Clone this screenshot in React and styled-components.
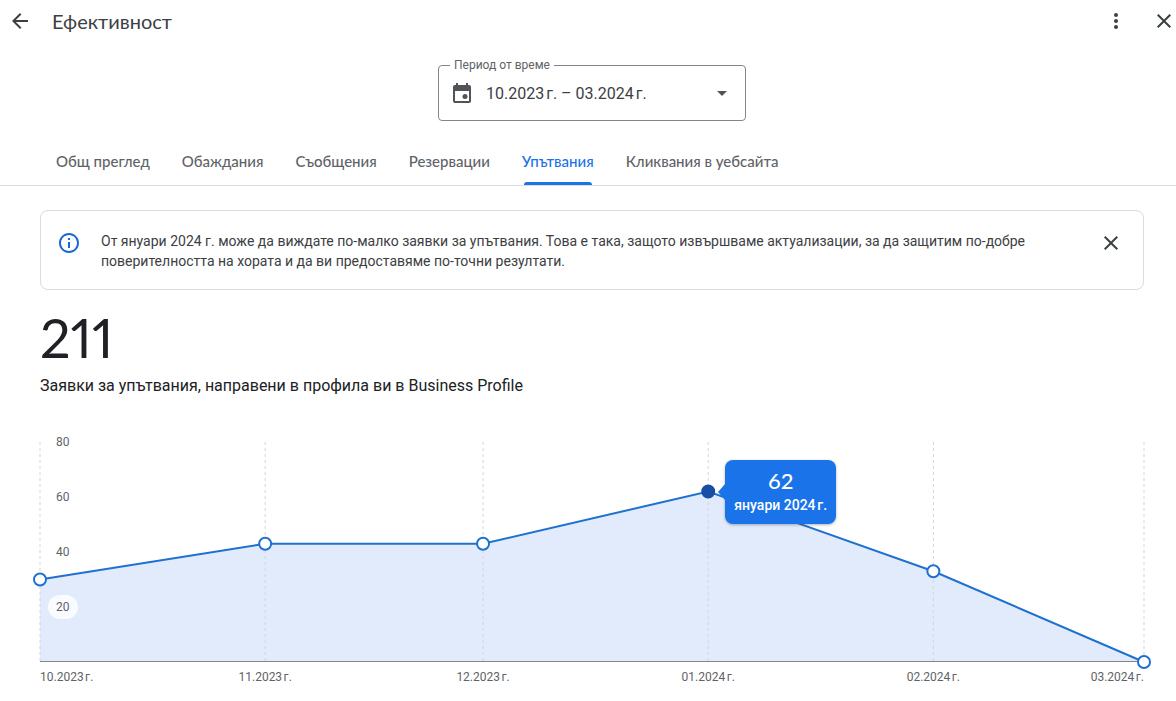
import React from 'react';
import styled, { createGlobalStyle } from 'styled-components';

const GlobalStyle = createGlobalStyle`
  * {
    box-sizing: border-box;
  }

  body {
    margin: 0;
    background: #fff;
    color: #3c4043;
    font-family: Roboto, "Noto Sans", sans-serif;
  }
`;

const brandFont = 'Lato, "Noto Sans", sans-serif';

const Header = styled.header`
  display: flex;
  align-items: center;
  height: 42px;
  padding-left: 8px;
`;

const Title = styled.h1`
  flex: 1;
  margin: 0 0 0 20px;
  font-family: ${brandFont};
  font-size: 20px;
  font-weight: 400;
  line-height: 24px;
`;

const HeaderActions = styled.div`
  display: flex;
  gap: 24px;
`;

const IconButton = styled.button`
  display: flex;
  width: 24px;
  height: 24px;
  padding: 0;
  border: 0;
  background: none;
  color: #3c4043;
  cursor: pointer;
`;

const Icon = styled.svg`
  flex: none;
  width: 24px;
  height: 24px;
  fill: currentColor;
`;

const PeriodRow = styled.div`
  display: flex;
  justify-content: center;
  padding: 15px 32px 0 40px;
`;

const PeriodField = styled.fieldset`
  width: 308px;
  height: 64px;
  min-width: 0;
  margin: 0;
  padding: 0;
  border: 1px solid #80868b;
  border-radius: 4px;
`;

const PeriodLegend = styled.legend`
  margin-left: 11px;
  padding: 0 4px;
  color: #5f6368;
  font-size: 12px;
  line-height: 16px;
`;

const PeriodButton = styled.button`
  display: flex;
  align-items: center;
  width: 100%;
  height: 40px;
  padding: 0 11px;
  border: 0;
  background: none;
  color: #3c4043;
  font-family: inherit;
  font-size: 16px;
  text-align: left;
  cursor: pointer;

  span {
    flex: 1;
    margin-left: 12px;
  }
`;

const FieldIcon = styled(Icon)`
  color: #505357;
`;

const Tabs = styled.nav`
  display: flex;
  gap: 32px;
  margin-top: 16px;
  padding: 0 56px;
  border-bottom: 1px solid #dadce0;
`;

const Tab = styled.a`
  height: 48px;
  color: ${(props) => (props.$active ? '#1a73e8' : '#5f6368')};
  font-family: ${brandFont};
  font-size: 15px;
  font-weight: 500;
  line-height: 48px;
  text-decoration: none;
  white-space: nowrap;

  &::after {
    content: '';
    display: ${(props) => (props.$active ? 'block' : 'none')};
    height: 3px;
    margin: -3px 2px 0;
    border-radius: 3px 3px 0 0;
    background: #1a73e8;
  }
`;

const Content = styled.main`
  padding: 24px 32px 0 40px;
`;

const Notice = styled.section`
  display: flex;
  align-items: flex-start;
  padding: 20px 20px 18px 16px;
  border: 1px solid #dadce0;
  border-radius: 8px;
`;

const InfoIcon = styled(Icon)`
  color: #1967d2;
`;

const NoticeText = styled.p`
  flex: 1;
  margin: 0 40px 0 20px;
  font-size: 14px;
  line-height: 20px;
`;

const Total = styled.div`
  margin-top: 20px;
  color: #202124;
  font-family: ${brandFont};
  font-size: 54px;
  font-variant-numeric: proportional-nums;
  line-height: 56px;
`;

const Caption = styled.p`
  margin: 8px 0 0;
  color: #202124;
  font-size: 16px;
  line-height: 24px;
`;

const ChartBox = styled.div`
  position: relative;
  margin-top: 44px;
`;

const Plot = styled.svg`
  display: block;
  width: 100%;
  height: 248px;
  overflow: visible;
`;

const AxisText = styled.text`
  fill: #5f6368;
  font-size: 12px;
`;

const Tooltip = styled.div`
  position: absolute;
  width: 111px;
  height: 64px;
  margin-left: 17px;
  padding-top: 9px;
  border-radius: 8px;
  background: #1a73e8;
  box-shadow: 0 1px 3px rgba(60, 64, 67, 0.4);
  color: #fff;
  text-align: center;

  &::before {
    content: '';
    position: absolute;
    top: 24px;
    left: -7px;
    border: solid transparent;
    border-width: 8px 7px 8px 0;
    border-right-color: #1a73e8;
  }
`;

const TooltipValue = styled.div`
  font-family: ${brandFont};
  font-size: 22px;
  font-weight: 500;
  line-height: 24px;
`;

const TooltipLabel = styled.div`
  font-size: 14px;
  font-weight: 500;
  line-height: 24px;
`;

const tabs = ['Общ преглед', 'Обаждания', 'Съобщения', 'Резервации', 'Упътвания', 'Кликвания в уебсайта'];

// day = days since the start of the period
const points = [
  { day: 0, value: 30, label: '10.2023\u202fг.' },
  { day: 31, value: 43, label: '11.2023\u202fг.' },
  { day: 61, value: 43, label: '12.2023\u202fг.' },
  { day: 92, value: 62, label: '01.2024\u202fг.' },
  { day: 123, value: 33, label: '02.2024\u202fг.' },
  { day: 152, value: 0, label: '03.2024\u202fг.' },
];

const TOTAL_DAYS = 152;
const MAX_VALUE = 80;
const PLOT_HEIGHT = 220;
const SELECTED = 3;

const toX = (day) => `${(day / TOTAL_DAYS) * 100}%`;
const toY = (value) => PLOT_HEIGHT - (value / MAX_VALUE) * PLOT_HEIGHT;

const labelAnchor = (index) => {
  if (index === 0) return 'start';
  return index === points.length - 1 ? 'end' : 'middle';
};

const CloseIcon = () => (
  <Icon viewBox="0 0 24 24">
    <path d="M19 6.41L17.59 5 12 10.59 6.41 5 5 6.41 10.59 12 5 17.59 6.41 19 12 13.41 17.59 19 19 17.59 13.41 12z" />
  </Icon>
);

const Chart = () => {
  const line = points.map((p) => `${p.day},${toY(p.value)}`).join(' ');

  return (
    <ChartBox>
      <Plot role="img" aria-label="Заявки за упътвания по месеци">
        <svg width="100%" height={PLOT_HEIGHT} viewBox={`0 0 ${TOTAL_DAYS} ${PLOT_HEIGHT}`} preserveAspectRatio="none" overflow="visible">
          <polygon points={`0,${PLOT_HEIGHT} ${line}`} fill="#e1ebfc" />
        </svg>
        {points.map((p) => (
          <line key={p.day} x1={toX(p.day)} x2={toX(p.day)} y1="0" y2={PLOT_HEIGHT} stroke="#d2d5d9" strokeDasharray="3 3" />
        ))}
        <line x1="0" x2="100%" y1="219.5" y2="219.5" stroke="#80868b" />
        <svg width="100%" height={PLOT_HEIGHT} viewBox={`0 0 ${TOTAL_DAYS} ${PLOT_HEIGHT}`} preserveAspectRatio="none" overflow="visible">
          <polyline points={line} fill="none" stroke="#1f71cf" strokeWidth="2" vectorEffect="non-scaling-stroke" />
        </svg>
        {points.map((p, i) => (
          <circle
            key={p.day}
            cx={toX(p.day)}
            cy={toY(p.value)}
            r="6"
            fill={i === SELECTED ? '#174ea6' : '#fff'}
            stroke={i === SELECTED ? '#174ea6' : '#1f71cf'}
            strokeWidth="2"
          />
        ))}
        <rect x="8" y="153" width="30" height="24" rx="12" fill="#fff" fillOpacity="0.8" />
        {[80, 60, 40, 20].map((value) => (
          <AxisText key={value} x="16" y={toY(value) + 4}>{value}</AxisText>
        ))}
        {points.map((p, i) => (
          <AxisText key={p.label} x={toX(p.day)} y="239" textAnchor={labelAnchor(i)}>{p.label}</AxisText>
        ))}
      </Plot>
      <Tooltip role="tooltip" style={{ left: toX(points[SELECTED].day), top: toY(points[SELECTED].value) - 32 }}>
        <TooltipValue>{points[SELECTED].value}</TooltipValue>
        <TooltipLabel>{'януари 2024\u202fг.'}</TooltipLabel>
      </Tooltip>
    </ChartBox>
  );
};

const App = () => {
  return (
    <>
      <GlobalStyle />
      <Header>
        <IconButton aria-label="Назад">
          <Icon viewBox="0 0 24 24">
            <path d="M20 11H7.83l5.59-5.59L12 4l-8 8 8 8 1.41-1.41L7.83 13H20v-2z" />
          </Icon>
        </IconButton>
        <Title lang="bg">Ефективност</Title>
        <HeaderActions>
          <IconButton aria-label="Още опции">
            <Icon viewBox="0 0 24 24">
              <circle cx="12" cy="6" r="2" />
              <circle cx="12" cy="12" r="2" />
              <circle cx="12" cy="18" r="2" />
            </Icon>
          </IconButton>
          <IconButton aria-label="Затваряне">
            <CloseIcon />
          </IconButton>
        </HeaderActions>
      </Header>
      <PeriodRow>
        <PeriodField>
          <PeriodLegend id="period-label">Период от време</PeriodLegend>
          <PeriodButton aria-labelledby="period-label period-value">
            <FieldIcon viewBox="0 0 24 24">
              <path d="M19 4h-1V2h-2v2H8V2H6v2H5a2 2 0 0 0-2 2v14a2 2 0 0 0 2 2h14a2 2 0 0 0 2-2V6a2 2 0 0 0-2-2zm0 16H5V10h14v10z" />
              <circle cx="15" cy="15.500" r="2.500" />
            </FieldIcon>
            <span id="period-value">{'10.2023\u202fг. – 03.2024\u202fг.'}</span>
            <FieldIcon viewBox="0 0 24 24">
              <path d="M7 10l5 5 5-5z" />
            </FieldIcon>
          </PeriodButton>
        </PeriodField>
      </PeriodRow>
      <Tabs lang="bg">
        {tabs.map((tab) => (
          <Tab key={tab} href="#" $active={tab === 'Упътвания'}>{tab}</Tab>
        ))}
      </Tabs>
      <Content>
        <Notice>
          <InfoIcon viewBox="0 0 24 24">
            <path d="M11 7h2v2h-2zm0 4h2v6h-2zm1-9C6.480 2 2 6.480 2 12s4.480 10 10 10 10-4.480 10-10S17.520 2 12 2zm0 18c-4.410 0-8-3.590-8-8s3.590-8 8-8 8 3.590 8 8-3.590 8-8 8z" />
          </InfoIcon>
          <NoticeText>
            От януари 2024 г. може да виждате по-малко заявки за упътвания. Това е така, защото извършваме актуализации, за да защитим по-добре поверителността на хората и да ви предоставяме по-точни резултати.
          </NoticeText>
          <IconButton aria-label="Скриване на съобщението">
            <CloseIcon />
          </IconButton>
        </Notice>
        <Total>211</Total>
        <Caption>Заявки за упътвания, направени в профила ви в Business Profile</Caption>
        <Chart />
      </Content>
    </>
  );
};

export default App;
